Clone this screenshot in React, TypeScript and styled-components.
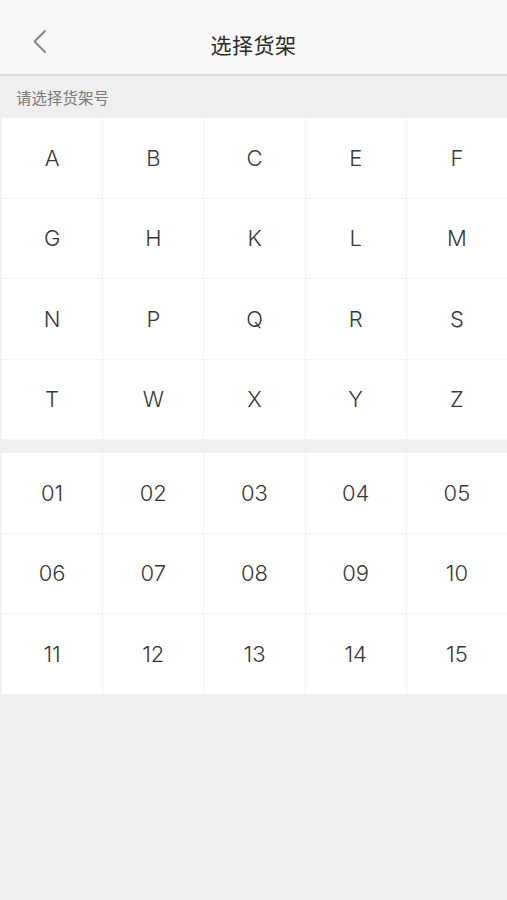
import { FC } from "react";
import styled, { createGlobalStyle } from "styled-components";

const GlobalStyle = createGlobalStyle`
    html, body {
        margin: 0;
        padding: 0;
        background: #efefef;
        font-family: Inter, "Noto Sans CJK SC", sans-serif;
    }
    #root {
        min-height: 900px;
    }
`;

const Page = styled.div`
    display: flex;
    flex-direction: column;
    width: 507px;
    min-height: 900px;
    background: #efefef;
`;

const Header = styled.header`
    position: relative;
    display: flex;
    align-items: center;
    justify-content: center;
    height: 74px;
    background: #f8f8f8;
    border-bottom: 2px solid #dadada;
    box-sizing: content-box;
`;

const BackButton = styled.button`
    position: absolute;
    left: 26px;
    top: 25px;
    width: 28px;
    height: 34px;
    padding: 0;
    border: none;
    background: transparent;
    display: flex;
    align-items: center;
    justify-content: center;
    cursor: pointer;
`;

const Title = styled.h1`
    margin: 0;
    padding-top: 14px;
    font-family: "Noto Sans CJK SC", sans-serif;
    font-size: 21px;
    font-weight: 400;
    color: #2b2b2b;
    letter-spacing: 0.5px;
`;

const Hint = styled.div`
    height: 42px;
    display: flex;
    align-items: center;
    padding-left: 16px;
    font-family: "Noto Sans CJK SC", sans-serif;
    font-size: 15.5px;
    color: #7a7a7a;
`;

const Grid = styled.div<{ $gapAfter?: boolean }>`
    display: grid;
    grid-template-columns: repeat(5, 1fr);
    grid-auto-rows: 80.5px;
    padding-left: 1px;
    margin-bottom: ${({ $gapAfter }) => ($gapAfter ? "13px" : "0")};
`;

const Cell = styled.button`
    display: flex;
    align-items: center;
    justify-content: center;
    margin: 0;
    padding: 0;
    background: #ffffff;
    border: none;
    border-left: 1px solid #f2f2f2;
    border-bottom: 1px solid #f2f2f2;
    box-sizing: border-box;
    font-family: Inter, "Liberation Sans", sans-serif;
    font-size: 22px;
    font-weight: 300;
    color: #383838;
    cursor: pointer;
    &:nth-child(5n + 1) {
        border-left-color: #f6f6f6;
    }
`;

const letters = ["A", "B", "C", "E", "F", "G", "H", "K", "L", "M", "N", "P", "Q", "R", "S", "T", "W", "X", "Y", "Z"];
const numbers = Array.from({ length: 15 }, (_, i) => String(i + 1).padStart(2, "0"));

const App: FC = () => {
    return (
        <Page>
            <GlobalStyle />
            <Header>
                <BackButton aria-label="返回">
                    <svg width="16" height="26" viewBox="0 0 16 26" fill="none">
                        <path d="M13 2 L2.5 12.5 L13 23" stroke="#8a8a8a" strokeWidth="2" strokeLinecap="round" strokeLinejoin="round" />
                    </svg>
                </BackButton>
                <Title>选择货架</Title>
            </Header>
            <Hint>请选择货架号</Hint>
            <Grid $gapAfter>
                {letters.map((l) => (
                    <Cell key={l}>{l}</Cell>
                ))}
            </Grid>
            <Grid>
                {numbers.map((n) => (
                    <Cell key={n}>{n}</Cell>
                ))}
            </Grid>
        </Page>
    );
};

export default App;
